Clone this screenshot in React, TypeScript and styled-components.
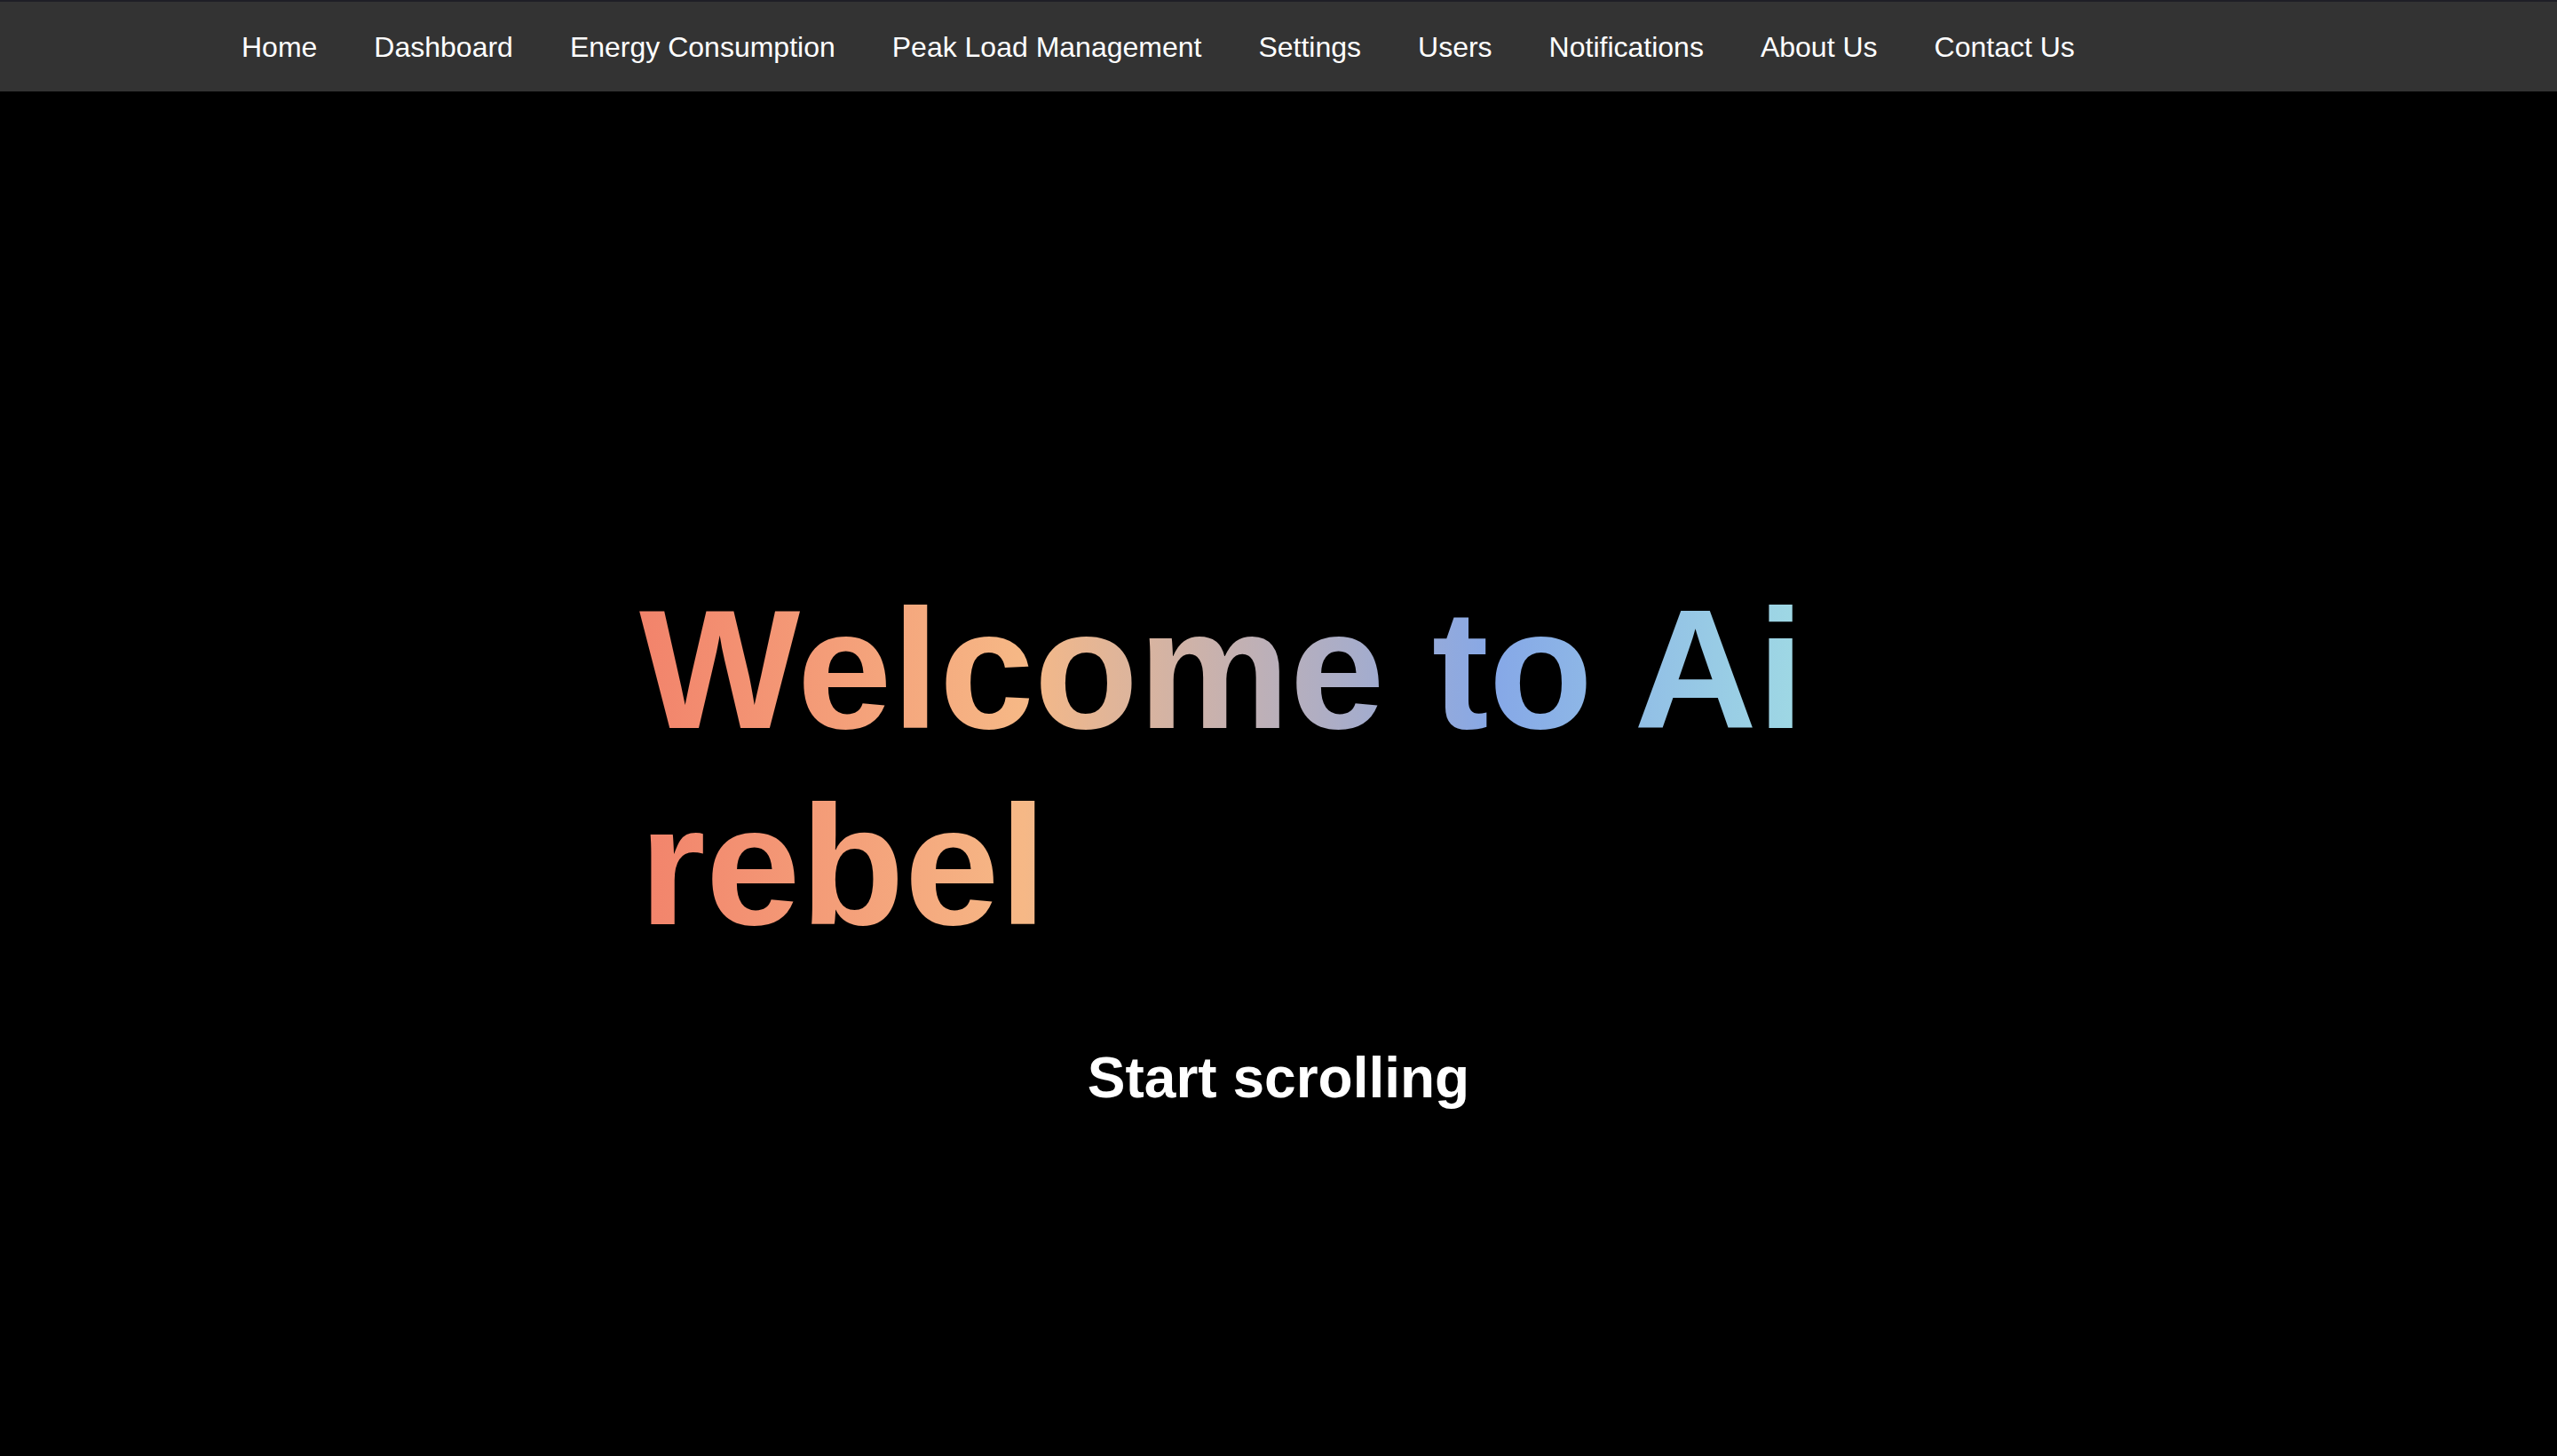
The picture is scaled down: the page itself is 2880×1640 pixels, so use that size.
import React from "react";
import styled, { createGlobalStyle } from "styled-components";

const GlobalStyle = createGlobalStyle`
  html, body {
    margin: 0;
    padding: 0;
    background: #000000;
    font-family: "Liberation Sans", Arial, Helvetica, sans-serif;
  }
  #root {
    min-height: 1640px;
    background: #000000;
  }
`;

const NavBar = styled.nav`
  height: 101px;
  border-top: 2px solid #1f1f26;
  background: #333333;
  display: flex;
  align-items: center;
`;

const NavList = styled.ul`
  list-style: none;
  margin: 0;
  padding: 0 0 0 272px;
  display: flex;
  align-items: center;
  gap: 64px;
`;

const NavItem = styled.li`
  margin: 0;
  padding: 0;
`;

const NavLink = styled.a`
  color: #ffffff;
  text-decoration: none;
  font-size: 32px;
  line-height: 1;
  font-family: "Liberation Sans", Arial, Helvetica, sans-serif;
`;

const Hero = styled.main`
  padding-top: 540px;
  display: flex;
  flex-direction: column;
  align-items: center;
`;

const Title = styled.h1`
  width: 1440px;
  margin: 0;
  font-size: 192px;
  font-weight: 700;
  line-height: normal;
  font-family: "Liberation Sans", Arial, Helvetica, sans-serif;
  background: linear-gradient(
    to right,
    #f2836b 0%,
    #f6b886 30%,
    #86a8e7 67%,
    #a0dbe4 92%
  );
  -webkit-background-clip: text;
  background-clip: text;
  color: transparent;
  -webkit-text-fill-color: transparent;
`;

const Subtitle = styled.h2`
  margin: 92px 0 0;
  color: #ffffff;
  font-size: 64px;
  font-weight: 700;
  line-height: normal;
  text-align: center;
  font-family: "Liberation Sans", Arial, Helvetica, sans-serif;
`;

const links = [
  "Home",
  "Dashboard",
  "Energy Consumption",
  "Peak Load Management",
  "Settings",
  "Users",
  "Notifications",
  "About Us",
  "Contact Us",
];

export default function App() {
  return (
    <>
      <GlobalStyle />
      <NavBar>
        <NavList>
          {links.map((l) => (
            <NavItem key={l}>
              <NavLink href="#">{l}</NavLink>
            </NavItem>
          ))}
        </NavList>
      </NavBar>
      <Hero>
        <Title>Welcome to Ai rebel</Title>
        <Subtitle>Start scrolling</Subtitle>
      </Hero>
    </>
  );
}
